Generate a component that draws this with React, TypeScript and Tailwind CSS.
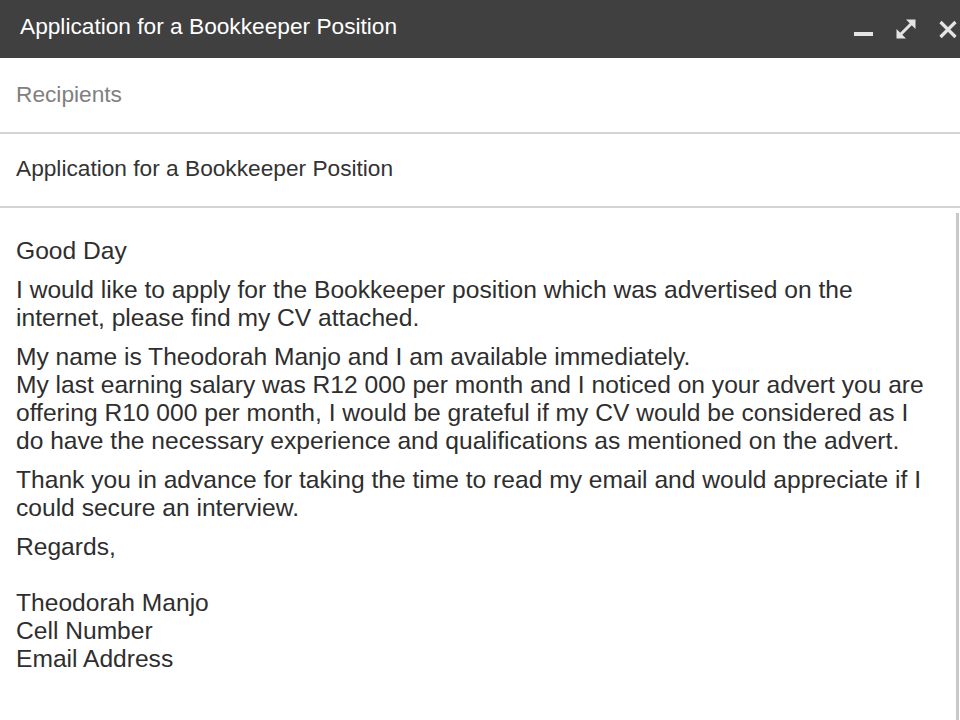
import React from "react";

function Header() {
  return (
    <div className="h-[58px] bg-[#404040] flex items-center justify-between pl-5 pr-[3px]">
      <h1 className="text-[22.7px] text-white leading-none -mt-[6px]">Application for a Bookkeeper Position</h1>
      <div className="flex items-start -mt-[1px]">
        {/* minimize */}
        <svg width="20" height="22" viewBox="0 0 20 22">
          <rect x="0" y="14" width="19" height="4" fill="#e4e4e4" />
        </svg>
        {/* expand */}
        <svg width="22" height="22" viewBox="0 0 22 22" className="ml-[21px]">
          <path d="M4 18 L17 5" stroke="#e4e4e4" strokeWidth="3" fill="none" />
          <path d="M11 1.5 L20.5 1.5 L20.5 11 Z" fill="#e4e4e4" />
          <path d="M1.5 11 L1.5 20.5 L11 20.5 Z" fill="#e4e4e4" />
        </svg>
        {/* close */}
        <svg width="18" height="22" viewBox="0 0 18 22" className="ml-[22px]">
          <g stroke="#e4e4e4" strokeWidth="3.2" strokeLinecap="butt">
            <path d="M1.5 4 L16.5 19" />
            <path d="M16.5 4 L1.5 19" />
          </g>
        </svg>
      </div>
    </div>
  );
}

function App() {
  return (
    <div className="w-[960px] h-[720px] bg-white overflow-hidden flex flex-col font-['Liberation_Sans',Arial,sans-serif]">
      <Header />
      <div className="h-[76px] border-b-2 border-[#d4d4d4] flex items-center px-4 pb-[2px] text-[22.7px] text-[#808080]">
        Recipients
      </div>
      <div className="h-[74px] border-b-2 border-[#d4d4d4] flex items-center px-4 pb-[3px] text-[22.7px] text-[#333]">
        Application for a Bookkeeper Position
      </div>
      <div className="flex-1 flex">
        <div className="flex-1 pl-4 pr-2 pt-[29px] text-[24.6px] leading-[28px] text-[#2e2e2e] flex flex-col gap-[11px] whitespace-nowrap">
          <p>Good Day</p>
          <p>
            I would like to apply for the Bookkeeper position which was advertised on the
            <br />
            internet, please find my CV attached.
          </p>
          <p>
            My name is Theodorah Manjo and I am available immediately.
            <br />
            My last earning salary was R12 000 per month and I noticed on your advert you are
            <br />
            offering R10 000 per month, I would be grateful if my CV would be considered as I
            <br />
            do have the necessary experience and qualifications as mentioned on the advert.
          </p>
          <p>
            Thank you in advance for taking the time to read my email and would appreciate if I
            <br />
            could secure an interview.
          </p>
          <p>
            Regards,
            <br />
            <br />
            Theodorah Manjo
            <br />
            Cell Number
            <br />
            Email Address
          </p>
        </div>
        <div className="w-[3px] mt-[5px] mr-[1px] bg-[#c8c8c8]" />
      </div>
    </div>
  );
}

export default App;
